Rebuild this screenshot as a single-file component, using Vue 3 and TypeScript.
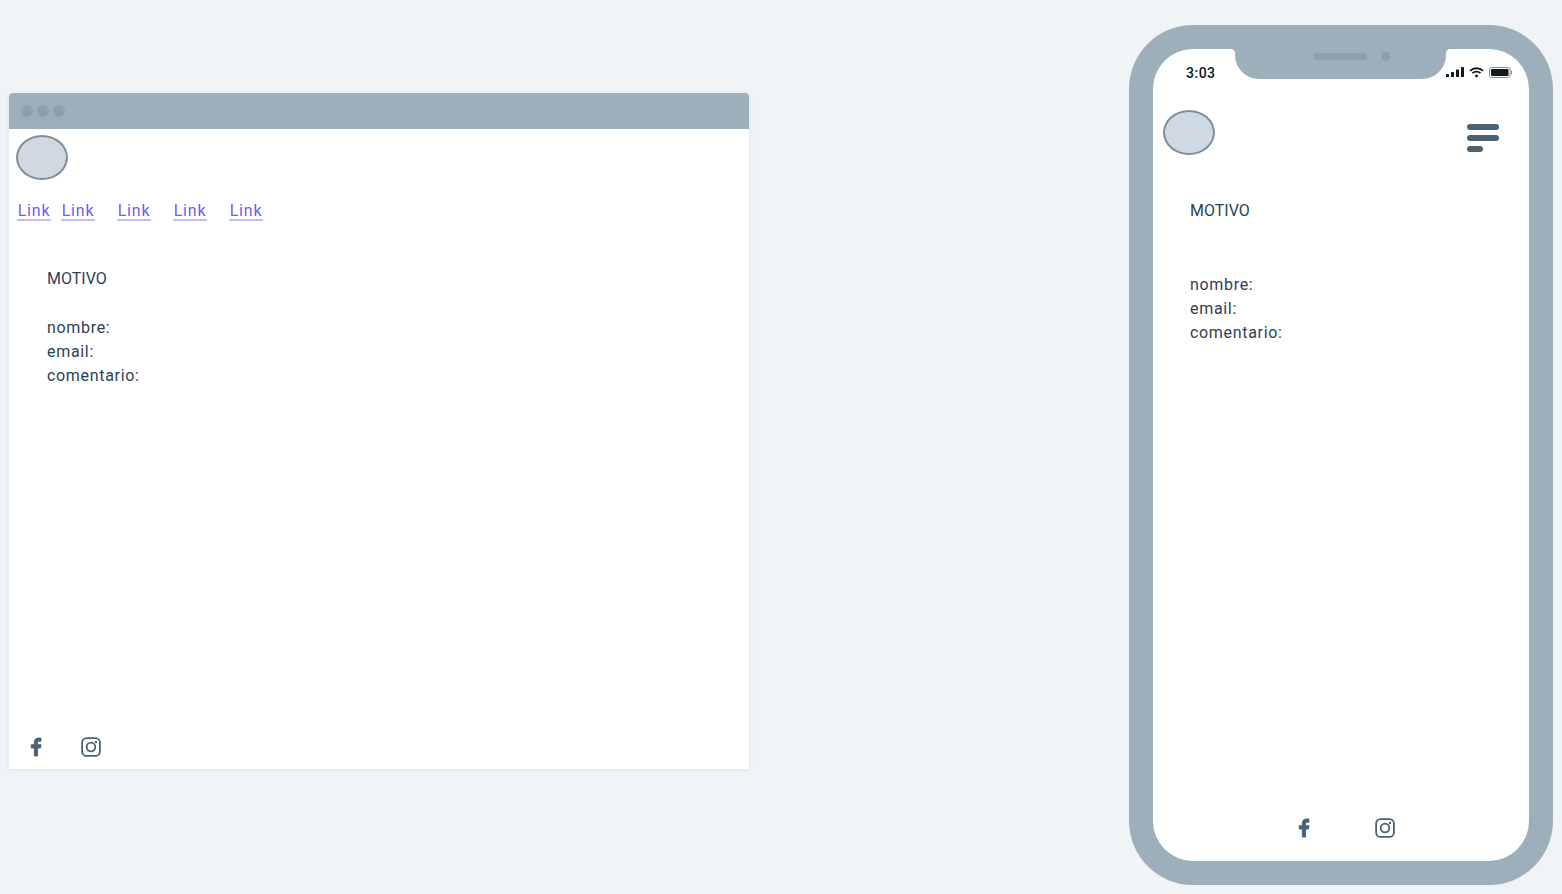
<script setup lang="ts">
const links: string[] = ['Link', 'Link', 'Link', 'Link', 'Link']
const fields: string[] = ['nombre:', 'email:', 'comentario:']
</script>

<template>
  <div class="page">
    <section class="browser">
      <header class="titlebar">
        <i class="dot"></i><i class="dot"></i><i class="dot"></i>
      </header>
      <div class="browser-body">
        <div class="logo"></div>
        <nav class="nav">
          <a v-for="(l, i) in links" :key="i" class="link" href="#">{{ l }}</a>
        </nav>
        <main class="content desktop-content">
          <p class="motivo">MOTIVO</p>
          <ul class="fields">
            <li v-for="f in fields" :key="f">{{ f }}</li>
          </ul>
        </main>
        <footer class="social desktop-social">
          <svg class="icon" viewBox="0 0 20 20"><path class="fb" d="M11.6 19v-8h2.9l.5-3.300h-3.400V5.900c0-1 .4-1.700 1.800-1.700H15V1.200C14.600 1.100 13.600 1 12.600 1 10 1 8.300 2.500 8.300 5.400v2.300H5.200V11h3.100v8z" /></svg>
          <svg class="icon ig-icon" viewBox="0 0 20 20"><rect x="1.100" y="1.100" width="17.800" height="17.800" rx="4.500" class="ig" /><circle cx="10" cy="10" r="4.300" class="ig" /><circle cx="15" cy="5" r="1.200" /></svg>
        </footer>
      </div>
    </section>

    <section class="phone">
      <div class="notch">
        <span class="speaker"></span>
        <span class="camera"></span>
      </div>
      <div class="screen">
        <div class="status">
          <span class="time">3:03</span>
          <div class="status-icons">
            <svg width="18" height="10" viewBox="0 0 18 10"><rect x="0" y="7" width="3" height="3" rx=".6" /><rect x="5" y="5" width="3" height="5" rx=".6" /><rect x="10" y="2.500" width="3" height="7.500" rx=".6" /><rect x="15" y="0" width="3" height="10" rx=".6" /></svg>
            <svg width="15" height="11" viewBox="0 0 15 11" class="wifi"><path d="M1 3.800C4.600.4 10.400.4 14 3.800" /><path d="M3.400 6.200c2.300-2.100 5.900-2.100 8.200 0" /><circle cx="7.500" cy="9" r="1.400" class="wifi-dot" /></svg>
            <svg width="24" height="11" viewBox="0 0 24 11"><rect x=".5" y=".5" width="20.500" height="10" rx="2" class="batt" /><rect x="2" y="2" width="17.500" height="7" rx=".8" /><rect x="22" y="3.500" width="1" height="4" rx=".5" fill="#8a8f94" /></svg>
          </div>
        </div>
        <div class="phone-head">
          <div class="logo"></div>
          <div class="burger"><i></i><i></i><i class="short"></i></div>
        </div>
        <main class="content phone-content">
          <p class="motivo">MOTIVO</p>
          <ul class="fields">
            <li v-for="f in fields" :key="f">{{ f }}</li>
          </ul>
        </main>
        <footer class="social phone-social">
          <svg class="icon" viewBox="0 0 20 20"><path class="fb" d="M11.6 19v-8h2.900l.5-3.300h-3.400V5.900c0-1 .4-1.700 1.800-1.700H15V1.200C14.600 1.100 13.600 1 12.600 1 10 1 8.300 2.500 8.300 5.400v2.300H5.200V11h3.100v8z" /></svg>
          <svg class="icon" viewBox="0 0 20 20"><rect x="1.100" y="1.100" width="17.800" height="17.800" rx="4.500" class="ig" /><circle cx="10" cy="10" r="4.300" class="ig" /><circle cx="15" cy="5" r="1.200" /></svg>
        </footer>
      </div>
    </section>
  </div>
</template>

<style>
html, body { margin: 0; background: #f0f4f7; }
</style>

<style scoped>
.page {
  box-sizing: border-box;
  width: 1562px;
  height: 894px;
  padding: 25px 9px 0;
  display: flex;
  justify-content: space-between;
  align-items: flex-start;
  background: #f0f4f7;
  font-family: Roboto, "Noto Sans", sans-serif;
  font-size: 16px;
  line-height: 24px;
  color: #2c4254;
}
.browser {
  width: 740px;
  height: 676px;
  margin-top: 68px;
  display: flex;
  flex-direction: column;
  background: #fff;
  border-radius: 4px 4px 0 0;
  box-shadow: 0 1px 4px rgba(98, 125, 152, 0.16);
}
.titlebar {
  height: 36px;
  flex: none;
  box-sizing: border-box;
  padding-left: 12px;
  display: flex;
  align-items: center;
  gap: 4px;
  background: #9dafbb;
  border-radius: 4px 4px 0 0;
}
.dot {
  width: 12px;
  height: 12px;
  border-radius: 50%;
  background: #8c9fad;
}
.browser-body {
  flex: 1;
  display: flex;
  flex-direction: column;
  padding: 6px 0 0 7px;
}
.logo {
  box-sizing: border-box;
  width: 52px;
  height: 45px;
  border-radius: 50%;
  background: #cfd9e2;
  border: 2px solid #7d8f9e;
}
.nav {
  display: flex;
  margin-top: 19px;
  padding-left: 1px;
}
.link {
  box-sizing: content-box;
  color: #6a62f0;
  text-decoration: none;
  border-bottom: 2px solid #c5bdf5;
  height: 20px;
  line-height: 24px;
  width: 34px;
  margin-right: 22px;
  text-align: center;
  white-space: nowrap;
  letter-spacing: 0.8px;
}
.link:first-child { margin-right: 10px; }
.content p { margin: 0; }
.motivo { letter-spacing: 0; }
.fields { list-style: none; margin: 0; padding: 0; letter-spacing: 0.68px; }
.desktop-content { padding: 46px 0 0 31px; }
.desktop-content .fields { margin-top: 25px; }
.social { display: flex; margin-top: auto; }
.desktop-social { gap: 34px; padding: 0 0 12px 10px; }
.icon { width: 20px; height: 20px; fill: #486176; display: block; }
.ig-icon { margin-left: 1px; }
.fb { stroke: #486176; stroke-width: 0.9; }
.ig { fill: none; stroke: #486176; stroke-width: 1.800; }
.phone {
  position: relative;
  box-sizing: border-box;
  width: 424px;
  height: 860px;
  padding: 24px;
  background: #9dafbb;
  border-radius: 64px;
}
.notch {
  position: absolute;
  top: 24px;
  left: 106px;
  width: 211px;
  height: 30px;
  background: #9dafbb;
  border-radius: 0 0 24px 24px;
  display: flex;
  align-items: center;
  padding-bottom: 16px;
  box-sizing: border-box;
  justify-content: center;
  gap: 14px;
}
.notch::before,
.notch::after {
  content: "";
  position: absolute;
  top: 0;
  width: 4px;
  height: 4px;
}
.notch::before {
  left: -4px;
  background: radial-gradient(circle at 0 100%, #fff 3.6px, #9dafbb 4.2px);
}
.notch::after {
  right: -4px;
  background: radial-gradient(circle at 100% 100%, #fff 3.6px, #9dafbb 4.2px);
}
.speaker { width: 53px; height: 7px; border-radius: 4px; background: #8c9fad; margin-left: 22px; }
.camera { width: 9px; height: 9px; border-radius: 50%; background: #8c9fad; }
.screen {
  height: 100%;
  display: flex;
  flex-direction: column;
  background: #fff;
  border-radius: 40px;
}
.status {
  height: 36px;
  flex: none;
  box-sizing: border-box;
  padding: 10px 16px 0 33px;
  display: flex;
  justify-content: space-between;
  align-items: center;
}
.time { font-size: 14px; font-weight: 500; color: #101820; letter-spacing: 0.5px; margin-top: 2px; }
.status-icons { display: flex; align-items: center; gap: 5px; fill: #101820; }
.wifi { fill: none; stroke: #101820; stroke-width: 1.800; }
.wifi-dot { fill: #101820; stroke: none; }
.batt { fill: none; stroke: #8a8f94; }
.phone-head {
  display: flex;
  justify-content: space-between;
  padding: 25px 30px 0 10px;
}
.burger { display: flex; flex-direction: column; gap: 5px; margin-top: 14px; width: 32px; }
.burger i { height: 6px; border-radius: 3px; background: #4d6273; }
.burger i.short { width: 16px; }
.phone-content { padding: 44px 0 0 37px; }
.phone-content .fields { margin-top: 50px; }
.phone-social { justify-content: center; gap: 61px; padding: 0 0 23px 6px; }
</style>
